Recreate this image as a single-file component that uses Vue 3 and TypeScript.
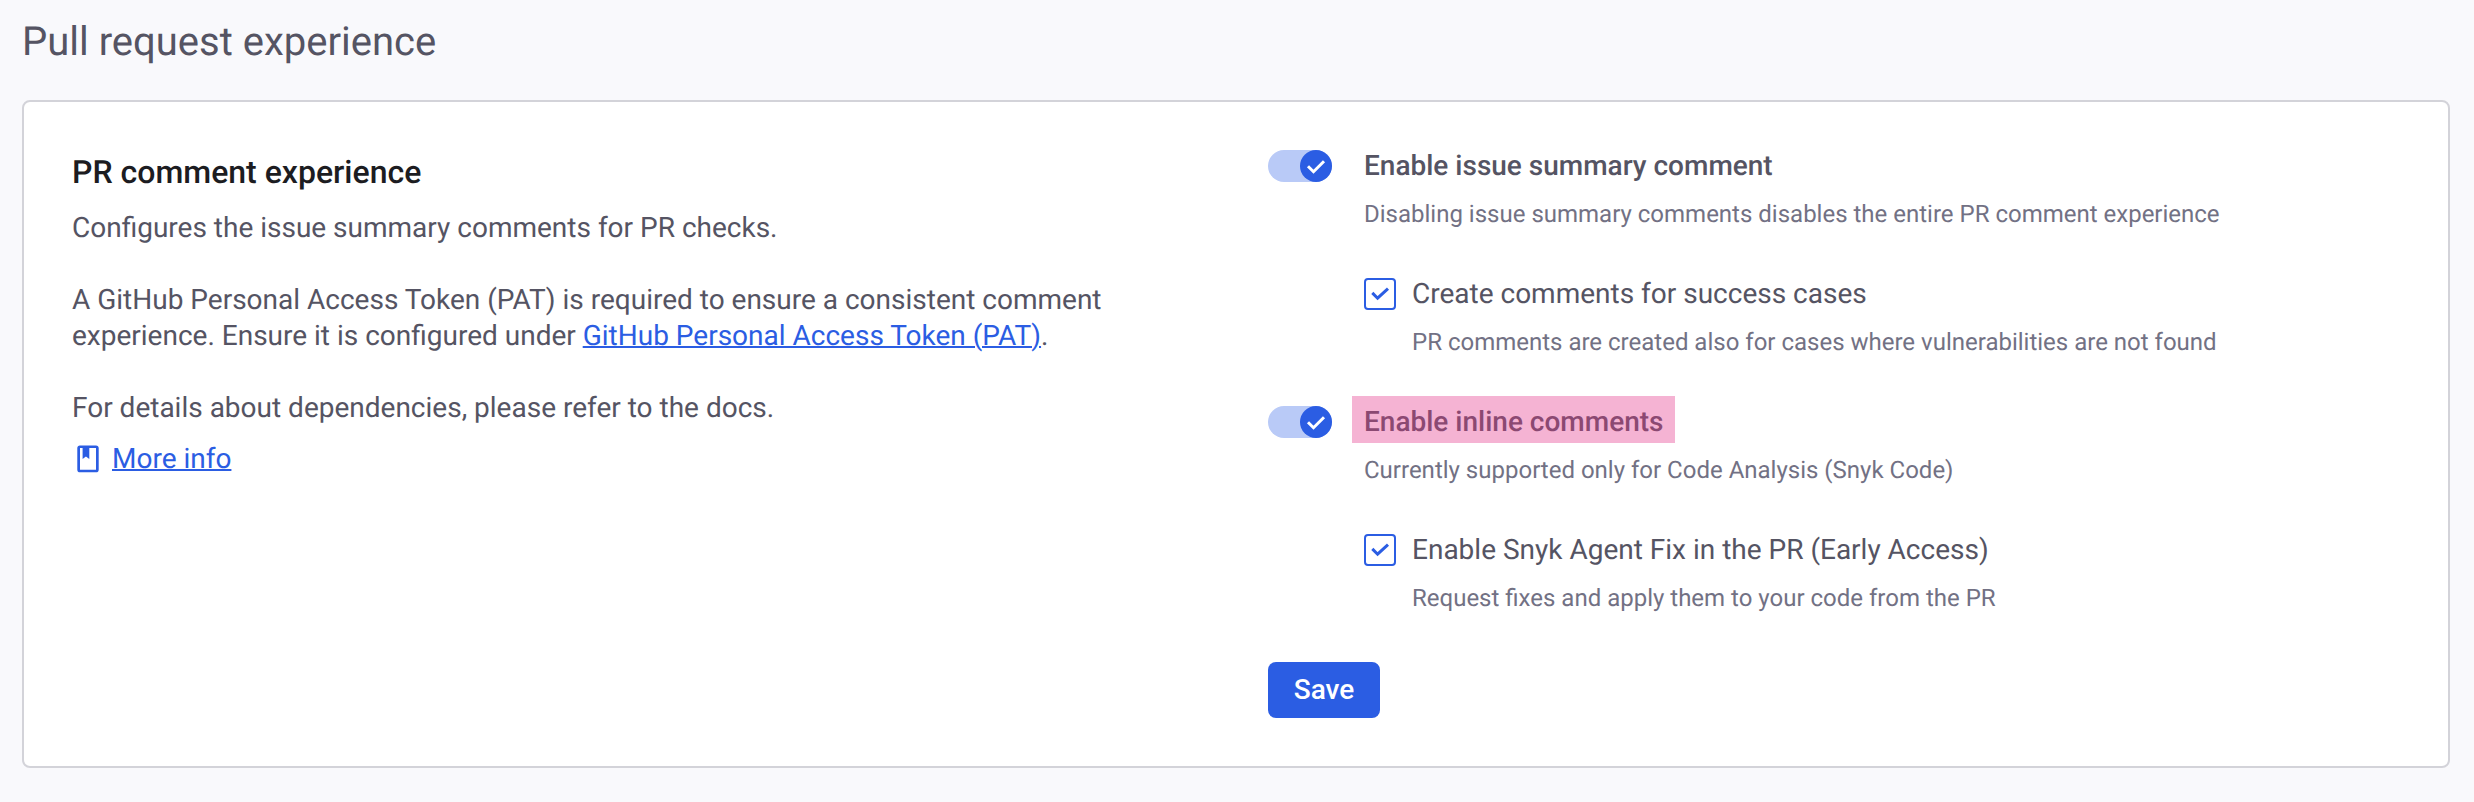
<script setup lang="ts">
import { ref } from 'vue'

interface Setting {
  label: string
  hint: string
  highlighted: boolean
  option: { label: string; hint: string }
}

const settings = ref<Setting[]>([
  {
    label: 'Enable issue summary comment',
    hint: 'Disabling issue summary comments disables the entire PR comment experience',
    highlighted: false,
    option: {
      label: 'Create comments for success cases',
      hint: 'PR comments are created also for cases where vulnerabilities are not found',
    },
  },
  {
    label: 'Enable inline comments',
    hint: 'Currently supported only for Code Analysis (Snyk Code)',
    highlighted: true,
    option: {
      label: 'Enable Snyk Agent Fix in the PR (Early Access)',
      hint: 'Request fixes and apply them to your code from the PR',
    },
  },
])
</script>

<template>
  <main class="page">
    <h1 class="title">Pull request experience</h1>
    <section class="card">
      <div class="info">
        <h2 class="heading">PR comment experience</h2>
        <p class="para">Configures the issue summary comments for PR checks.</p>
        <p class="para">
          A GitHub Personal Access Token (PAT) is required to ensure a consistent comment<br />
          experience. Ensure it is configured under <a class="link" href="#">GitHub Personal Access Token (PAT)</a>.
        </p>
        <p class="para">For details about dependencies, please refer to the docs.</p>
        <div class="more">
          <svg class="book" viewBox="0 0 32 32" width="32" height="32">
            <path fill="currentColor" fill-rule="evenodd" d="M8 2.500h16a2.700 2.700 0 0 1 2.700 2.600v21.600a2.700 2.700 0 0 1-2.700 2.600H8a2.700 2.700 0 0 1-2.700-2.600V5.100A2.700 2.700 0 0 1 8 2.500zM8 5.100v21.600h16V5.100h-6.700V16l-3.350-2.500L10.600 16V5.100z" />
          </svg>
          <a class="link" href="#">More info</a>
        </div>
      </div>
      <form class="settings" @submit.prevent>
        <div v-for="s in settings" :key="s.label" class="group">
          <div class="row">
            <span class="toggle" role="switch" aria-checked="true">
              <span class="knob">
                <svg viewBox="0 0 32 32" width="32" height="32"><path class="tick" d="M8 16.200l5.500 5.500L24 11.200" /></svg>
              </span>
            </span>
            <span class="label" :class="{ highlighted: s.highlighted }">{{ s.label }}</span>
          </div>
          <p class="hint">{{ s.hint }}</p>
          <div class="row option">
            <span class="checkbox" role="checkbox" aria-checked="true">
              <svg viewBox="0 0 28 28" width="28" height="28"><path class="tick" d="M6.300 12.900l5.300 5.300L22 8.700" /></svg>
            </span>
            <span class="option-label">{{ s.option.label }}</span>
          </div>
          <p class="hint option-hint">{{ s.option.hint }}</p>
        </div>
        <button class="save" type="submit">Save</button>
      </form>
    </section>
  </main>
</template>

<style>
body {
  margin: 0;
  background: #f9f9fc;
}
</style>

<style scoped>
.page {
  box-sizing: border-box;
  height: 802px;
  padding: 18px 24px 0 22px;
  background: #f9f9fc;
  color: #555463;
  font-family: Roboto, "Liberation Sans", sans-serif;
  font-size: 28px;
  line-height: 36px;
  text-rendering: geometricPrecision;
  overflow: hidden;
}
.title {
  margin: 0 0 34px;
  font-size: 40px;
  font-weight: 400;
  line-height: 48px;
}
.card {
  box-sizing: border-box;
  display: flex;
  height: 668px;
  padding: 48px;
  border: 2px solid #d3d3d9;
  border-radius: 8px;
  background: #fff;
}
.info {
  width: 1196px;
  flex: none;
}
.heading {
  margin: 2px 0 18px;
  color: #1c1c21;
  font-size: 32px;
  font-weight: 500;
  line-height: 40px;
}
.para {
  margin: 0 0 36px;
  white-space: nowrap;
}
.link {
  color: #2b5de3;
  text-decoration: underline;
  text-decoration-thickness: 2px;
}
.more {
  display: flex;
  align-items: center;
  gap: 8px;
  margin-top: -21px;
}
.book {
  color: #2b5de3;
}
.group {
  height: 256px;
}
.row {
  display: flex;
  align-items: center;
  height: 32px;
  white-space: nowrap;
}
.toggle {
  display: flex;
  justify-content: flex-end;
  width: 64px;
  height: 32px;
  margin-right: 32px;
  border-radius: 16px;
  background: #b9caf7;
}
.knob {
  width: 32px;
  height: 32px;
  border-radius: 50%;
  background: #2b5de3;
  color: #fff;
}
svg {
  display: block;
}
.tick {
  fill: none;
  stroke: currentColor;
  stroke-width: 3;
}
.label {
  position: relative;
  font-weight: 500;
}
.highlighted::after {
  content: "";
  position: absolute;
  inset: -8px -12px -3px;
  background: rgba(229, 55, 139, 0.38);
}
.hint {
  margin: 14px 0 0 96px;
  color: #727184;
  font-size: 24px;
  line-height: 36px;
  white-space: nowrap;
}
.option {
  margin: 46px 0 0 96px;
}
.checkbox {
  box-sizing: border-box;
  width: 32px;
  height: 32px;
  margin-right: 16px;
  border: 2px solid #2b5de3;
  border-radius: 4px;
  color: #2b5de3;
}
.option-hint {
  margin-left: 144px;
}
.save {
  display: block;
  width: 112px;
  height: 56px;
  padding: 0;
  border: 0;
  border-radius: 8px;
  background: #2b5de3;
  color: #fff;
  font: 500 28px/36px Roboto, "Liberation Sans", sans-serif;
}
</style>
